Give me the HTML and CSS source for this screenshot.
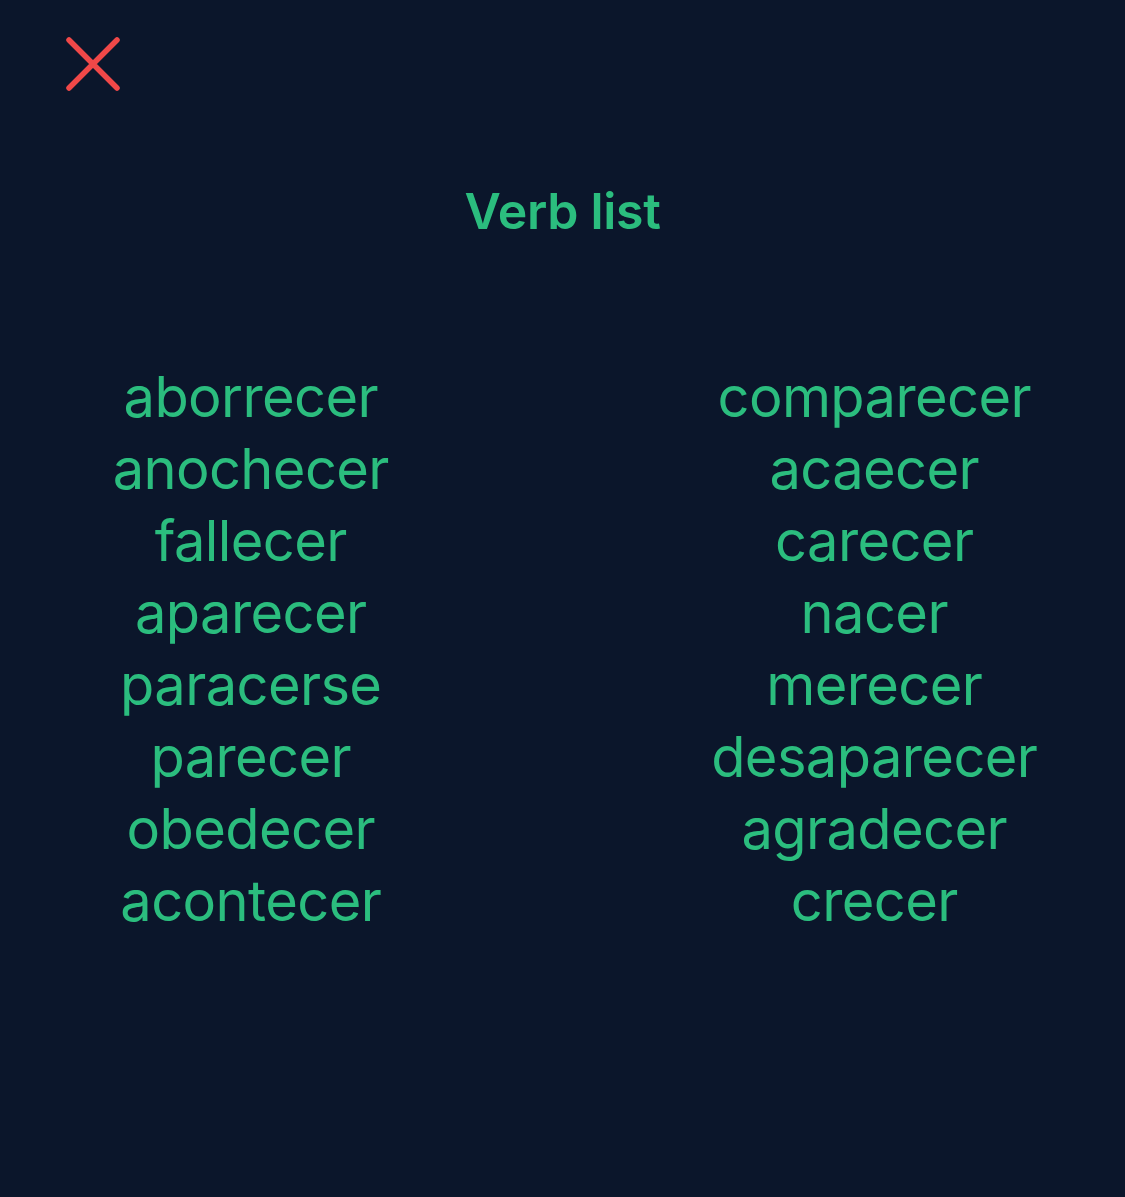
FILE: index.html
```html
<!DOCTYPE html>
<html lang="es">
<head>
<meta charset="utf-8">
<title>Verb list</title>
<link rel="stylesheet" href="styles.css">
</head>
<body>
<div class="screen">
  <header class="topbar">
    <button class="close" aria-label="Close">
      <svg width="54" height="54" viewBox="0 0 54 54" fill="none">
        <path d="M3 3 L51 51 M51 3 L3 51" stroke="#f04848" stroke-width="5.5" stroke-linecap="round"/>
      </svg>
    </button>
  </header>
  <h1 class="title">Verb list</h1>
  <div class="verbs">
    <ul class="col">
      <li>aborrecer</li>
      <li>anochecer</li>
      <li>fallecer</li>
      <li>aparecer</li>
      <li>paracerse</li>
      <li>parecer</li>
      <li>obedecer</li>
      <li>acontecer</li>
    </ul>
    <ul class="col">
      <li>comparecer</li>
      <li>acaecer</li>
      <li>carecer</li>
      <li>nacer</li>
      <li>merecer</li>
      <li>desaparecer</li>
      <li>agradecer</li>
      <li>crecer</li>
    </ul>
  </div>
</div>
</body>
</html>
```
FILE: styles.css
```css
html, body {
  margin: 0;
  padding: 0;
  background: #0b162b;
}
body {
  font-family: Inter, "Noto Sans", "Liberation Sans", sans-serif;
  color: #2bbd7e;
}
.screen {
  width: 1125px;
  height: 1197px;
  box-sizing: border-box;
  padding-top: 37px;
}
.topbar {
  display: flex;
  padding-left: 66px;
}
.close {
  background: none;
  border: 0;
  padding: 0;
  width: 54px;
  height: 54px;
  display: block;
  cursor: pointer;
}
.close svg { display: block; }
.title {
  margin: 90px 0 0;
  text-align: center;
  font-size: 50px;
  font-weight: 600;
  line-height: 60px;
  letter-spacing: -0.3px;
}
.verbs {
  display: grid;
  grid-template-columns: 1fr 1fr;
  column-gap: 248px;
  padding: 0 63px;
  margin-top: 120px;
}
.col {
  list-style: none;
  margin: 0;
  padding: 0;
  text-align: center;
}
.col li {
  font-size: 56px;
  line-height: 72px;
  font-weight: 400;
  letter-spacing: -0.6px;
}
```
